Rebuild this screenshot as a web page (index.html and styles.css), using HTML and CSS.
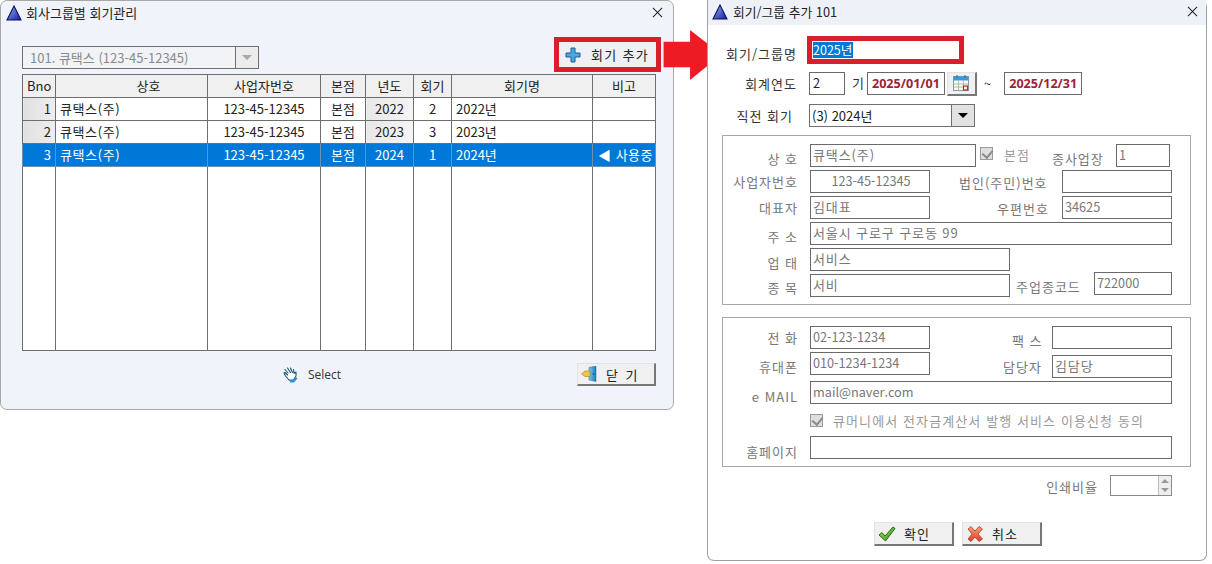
FILE: index.html
```html
<!DOCTYPE html>
<html lang="ko">
<head>
<meta charset="utf-8">
<title>회기관리</title>
<link rel="stylesheet" href="styles.css">
</head>
<body>
<section class="window win-left">
  <header class="titlebar">
    <svg class="app-icon" viewBox="0 0 16 16"><defs><linearGradient id="tri" x1="0" y1="0" x2="1" y2="1"><stop offset="0" stop-color="#9db4ff"/><stop offset="1" stop-color="#10189a"/></linearGradient><linearGradient id="chk" x1="0" y1="0" x2="1" y2="1"><stop offset="0" stop-color="#a6e05a"/><stop offset="1" stop-color="#2f8f1e"/></linearGradient><linearGradient id="xx" x1="0" y1="0" x2="0" y2="1"><stop offset="0" stop-color="#f7a080"/><stop offset="1" stop-color="#e23c22"/></linearGradient><linearGradient id="door" x1="0" y1="0" x2="1" y2="0"><stop offset="0" stop-color="#7cc8ef"/><stop offset="1" stop-color="#1878b8"/></linearGradient></defs><path d="M8 1 L15 15 H1 Z" fill="url(#tri)" stroke="#0a1060" stroke-width="1.1"/></svg>
    <span class="title">회사그룹별 회기관리</span>
    <svg class="close" viewBox="0 0 12 12"><path d="M1 1 L11 11 M11 1 L1 11" stroke="#222" stroke-width="1.1" fill="none"/></svg>
  </header>
  <div class="left-body">
    <div class="left-top">
      <div class="combo combo-company">
        <span class="combo-text">101. 큐택스 (123-45-12345)</span>
        <span class="combo-btn disabled"><i class="down"></i></span>
      </div>
      <div class="add-frame">
        <button class="btn add-btn">
          <svg class="ico16" viewBox="0 0 16 16"><path d="M6 1 H10 V6 H15 V10 H10 V15 H6 V10 H1 V6 H6 Z" fill="#4aa8e0" stroke="#1c5f96" stroke-width="1"/></svg>
          <span>회기 추가</span>
        </button>
      </div>
    </div>
    <table class="grid">
      <colgroup><col class="c1"><col class="c2"><col class="c3"><col class="c4"><col class="c5"><col class="c6"><col class="c7"><col class="c8"></colgroup>
      <thead><tr><th>Bno</th><th class="th-name">상호</th><th>사업자번호</th><th>본점</th><th>년도</th><th>회기</th><th>회기명</th><th>비고</th></tr></thead>
      <tbody>
        <tr><td class="num idx">1</td><td class="kr">큐택스(주)</td><td class="ctr">123-45-12345</td><td class="ctr">본점</td><td class="ctr yr">2022</td><td class="ctr">2</td><td>2022년</td><td></td></tr>
        <tr><td class="num idx">2</td><td class="kr">큐택스(주)</td><td class="ctr">123-45-12345</td><td class="ctr">본점</td><td class="ctr yr">2023</td><td class="ctr">3</td><td>2023년</td><td></td></tr>
        <tr class="sel"><td class="num">3</td><td class="kr">큐택스(주)</td><td class="ctr">123-45-12345</td><td class="ctr">본점</td><td class="ctr">2024</td><td class="ctr">1</td><td>2024년</td><td class="using">◀ 사용중</td></tr>
        <tr class="filler"><td></td><td></td><td></td><td></td><td></td><td></td><td></td><td></td></tr>
      </tbody>
    </table>
    <div class="left-bottom">
      <div class="select-link">
        <svg class="ico16" viewBox="0 0 16 16"><path d="M2 2.5 L5 6 M4.5 1 L7.5 5.5 M7.5 1 L9.5 5.5 M10.5 2.5 L11 6.5 L13 5 L13 9 L10.5 13 L6 13 L2.5 9 L1 6 L2 5.5 L4.5 8" fill="#fff" stroke="#17566f" stroke-width="1.1" stroke-linejoin="round" stroke-linecap="round"/><path d="M6 13 L10.5 13 L13 10 L14.5 11.5 L11 15.5 L7.5 15.5 Z" fill="#2f93d8"/></svg>
        <span>Select</span>
      </div>
      <button class="btn close-btn">
        <svg class="ico16" viewBox="0 0 16 16"><path d="M8 1.5 L15 0 V15.5 L8 14 Z" fill="url(#door)" stroke="#1a6aa0" stroke-width=".5"/><circle cx="12.5" cy="8" r=".7" fill="#0d3f66"/><path d="M0.5 8 L4 5 H9 V10.5 H4 Z" fill="#eec34e" stroke="#a0801f" stroke-width=".6"/></svg>
        <span>닫 기</span>
      </button>
    </div>
  </div>
</section>

<svg class="arrow" viewBox="0 0 60 52"><path d="M0 12 H27 V0 L59 25 L27 51 V38 H0 Z" fill="#ed1c24"/></svg>

<section class="window win-right">
  <header class="titlebar">
    <svg class="app-icon" viewBox="0 0 16 16"><path d="M8 1 L15 15 H1 Z" fill="url(#tri)" stroke="#0a1060" stroke-width="1.1"/></svg>
    <span class="title">회기/그룹 추가 101</span>
    <svg class="close" viewBox="0 0 12 12"><path d="M1 1 L11 11 M11 1 L1 11" stroke="#222" stroke-width="1.1" fill="none"/></svg>
  </header>
  <div class="form">
    <div class="row r-name">
      <label class="lab dark lab-name">회기/그룹명</label>
      <div class="name-box"><span class="selected">2025년</span></div>
    </div>
    <div class="row r-year">
      <label class="lab dark">회계연도</label>
      <div class="inp dark w36">2</div>
      <span class="gi">기</span>
      <div class="inp date w78">2025/01/01</div>
      <button class="btn cal-btn">
        <svg class="ico18" viewBox="0 0 18 18"><rect x="1.5" y="2.5" width="15" height="14" fill="#fbfbfb" stroke="#8a9aa8"/><rect x="1.5" y="2.5" width="15" height="4" fill="#3a9ad9"/><path d="M5 1 V4 M13 1 V4" stroke="#2a6a9a" stroke-width="1"/><path d="M2 10 H16 M2 13 H16 M6.5 7 V16 M11.5 7 V16" stroke="#9bb08a" stroke-width=".8"/><rect x="11.5" y="12" width="4" height="4" fill="#fff" stroke="#c22" stroke-width="1.2"/></svg>
      </button>
      <span class="tilde">~</span>
      <div class="inp date w78">2025/12/31</div>
    </div>
    <div class="row r-prev">
      <label class="lab dark lab-prev">직전 회기</label>
      <div class="combo combo-prev">
        <span class="combo-text dark">(3) 2024년</span>
        <span class="combo-btn"><i class="down black"></i></span>
      </div>
    </div>

    <div class="group g1">
      <div class="row"><label class="lab lab-d1">상 호</label><div class="inp kr w166">큐택스(주)</div><span class="chk chk1"></span><span class="txt bonjeom">본점</span><span class="txt worksite">종사업장</span><div class="inp w54">1</div></div>
      <div class="row"><label class="lab">사업자번호</label><div class="inp w120 ctr">123-45-12345</div><span class="txt corp">법인(주민)번호</span><div class="inp w110"></div></div>
      <div class="row"><label class="lab">대표자</label><div class="inp kr w120">김대표</div><span class="txt post">우편번호</span><div class="inp w110">34625</div></div>
      <div class="row"><label class="lab lab-d1">주 소</label><div class="inp kr w362">서울시 구로구 구로동 99</div></div>
      <div class="row"><label class="lab lab-d1">업 태</label><div class="inp kr w200">서비스</div></div>
      <div class="row"><label class="lab lab-d3">종 목</label><div class="inp kr w200">서비</div><span class="txt mainbiz">주업종코드</span><div class="inp w78 up2">722000</div></div>
    </div>

    <div class="group g2">
      <div class="row"><label class="lab">전 화</label><div class="inp w120">02-123-1234</div><span class="txt fax">팩 스</span><div class="inp w120 fax-inp"></div></div>
      <div class="row"><label class="lab lab-d1">휴대폰</label><div class="inp w120">010-1234-1234</div><span class="txt manager">담당자</span><div class="inp kr w120 fax-inp down3">김담당</div></div>
      <div class="row row-mail"><label class="lab lab-d2">e MAIL</label><div class="inp w362">mail@naver.com</div></div>
      <div class="row row-agree"><span class="chk chk2"></span><span class="txt agree">큐머니에서 전자금계산서 발행 서비스 이용신청 동의</span></div>
      <div class="row row-home"><label class="lab lab-d2">홈페이지</label><div class="inp w362"></div></div>
    </div>

    <div class="print-row">
      <span class="txt">인쇄비율</span>
      <div class="spin"><span class="spin-btns"><i class="up-tri"></i><i class="down-tri"></i></span></div>
    </div>

    <div class="actions">
      <button class="btn act-btn">
        <svg class="ico18" viewBox="0 0 18 18"><path d="M1 10 L4 7.5 L7 11 L15 2 L17 3.5 L7.5 16 Z" fill="url(#chk)" stroke="#2a6e12" stroke-width="1"/></svg>
        <span>확인</span>
      </button>
      <button class="btn act-btn">
        <svg class="ico18" viewBox="0 0 18 18"><path d="M2 4 L5 1.5 L9 6 L13 1.5 L16.5 4 L12 9 L16.5 14 L13 16.5 L9 12 L5 16.5 L2 14 L6 9 Z" fill="url(#xx)" stroke="#b03a20" stroke-width=".8"/></svg>
        <span>취소</span>
      </button>
    </div>
  </div>
</section>
</body>
</html>
```
FILE: styles.css
```css
* { box-sizing: border-box; }
html, body { margin: 0; padding: 0; }
body {
  position: relative;
  width: 1212px;
  height: 564px;
  overflow: hidden;
  background: #fff;
  font-family: "Noto Sans CJK KR", "Open Sans", sans-serif;
  font-size: 13px;
  color: #222;
}
.window { position: absolute; top: 0; display: flex; flex-direction: column; }
.win-left {
  left: 0; width: 674px; height: 410px;
  background: #f0f3f9;
  border: 1px solid #a8a8a8;
  border-radius: 7px;
}
.win-right {
  left: 707px; width: 500px; height: 561px;
  background: #fff;
  border: 1px solid #a0a0a0;
  border-top: 0;
  border-radius: 0 7px 7px 7px;
}
.titlebar {
  display: flex; align-items: center;
  height: 25px; flex: none;
  padding: 0 10px 2px 5px;
}
.win-right .titlebar { background: #eef2f8; padding: 0 8px 2px 4px; }
.app-icon { width: 16px; height: 16px; margin-right: 4px; }
.win-right .app-icon { margin-right: 5px; }
.title { flex: 1; font-size: 13px; line-height: 16px; color: #222; }
.win-right .title { font-size: 12.8px; }
.close { width: 11px; height: 11px; }

.left-body { padding: 11px 17px 0 21px; display: flex; flex-direction: column; flex: 1; }
.left-top { display: flex; justify-content: space-between; align-items: flex-start; height: 37px; }

.combo {
  display: flex; align-items: stretch;
  height: 23px;
  border: 1px solid #707070;
  background: #f1f3f7;
}
.combo-company { width: 237px; margin-top: 9px; }
.combo-text { flex: 1; padding-left: 7px; font-size: 13px; line-height: 21px; color: #8a8a8a; white-space: nowrap; }
.combo-text.dark { color: #222; padding-left: 2px; }
.combo-btn {
  width: 23px; background: #e2e2e2;
  border-left: 1px solid #707070;
  display: flex; align-items: center; justify-content: center;
}
.combo-btn.disabled { background: #ececec; }
.down { width: 0; height: 0; border-left: 5px solid transparent; border-right: 5px solid transparent; border-top: 5px solid #a8a8a8; }
.down.black { border-top-color: #000; }

.btn {
  display: flex; align-items: center;
  padding: 0; margin: 0;
  background: #f0f0f0;
  border: 1px solid #e2e2e2;
  border-right: 2px solid #777;
  border-bottom: 2px solid #777;
  font-family: inherit; font-size: 13px; color: #222;
}
.ico16 { width: 16px; height: 16px; flex: none; }
.ico18 { width: 18px; height: 18px; flex: none; }

.add-frame {
  width: 107px; height: 35px;
  margin: 0 -5px 0 0;
  border: 5px solid #d9202a;
  background: #fff;
}
.add-btn {
  width: 97px; height: 25px;
  border: 0; background: #eef0f3;
  padding-left: 6px; gap: 10px;
  letter-spacing: 1.3px;
}

.grid {
  width: 633px; height: 277px;
  border-collapse: collapse; table-layout: fixed;
  background: #fff; font-size: 13px;
}
.grid th, .grid td { border: 1px solid #6e6e6e; padding: 0 4px; white-space: nowrap; overflow: hidden; }
.grid th { background: #f0f0f0; font-weight: 400; height: 23px; line-height: 20px; }
.grid th.th-name { padding-left: 38px; }
.grid td { height: 23px; line-height: 20px; }
.c1 { width: 33px; } .c2 { width: 152px; } .c3 { width: 113px; } .c4 { width: 45px; }
.c5 { width: 48px; } .c6 { width: 38px; } .c7 { width: 141px; } .c8 { width: 63px; }
.ctr { text-align: center; }
.num { text-align: right; }
.kr { letter-spacing: .6px; }
.grid td.idx { background: linear-gradient(90deg, #e0e0e0, #eeeeee); }
.grid td.yr { background: linear-gradient(90deg, #e8e8e8, #f4f4f4); }
.grid .sel td { background: #0078d7; color: #fff; border-color: #6e8fae; border-top: 1px dotted #9db5cc; }
.grid .sel td.using { padding: 0 0 0 5px; letter-spacing: .5px; }
.grid .filler td { height: auto; }

.left-bottom { display: flex; align-items: center; justify-content: space-between; padding: 12px 0 0 261px; }
.select-link { display: flex; align-items: center; gap: 9px; color: #333; font-family: "Open Sans", sans-serif; font-size: 12px; }
.close-btn { width: 79px; height: 23px; padding-left: 3px; gap: 9px; letter-spacing: 2px; }

.arrow { position: absolute; left: 663px; top: 30px; width: 60px; height: 51px; }

.form { padding: 11px 0 0 14px; flex: 1; }
.row { display: flex; align-items: center; height: 23px; margin-bottom: 3px; }
.lab {
  width: 75px; margin-right: 12px; flex: none;
  text-align: right; font-size: 13px; color: #777; letter-spacing: 1px; white-space: nowrap;
}
.lab.dark { color: #333; }
.lab-d1 { margin-top: 5px; }
.lab-d2 { margin-top: 7px; }
.lab-d3 { margin-top: 3px; }
.inp {
  height: 23px; flex: none;
  border: 1px solid #6a6a6a;
  background: #fff;
  padding-left: 2px;
  font-size: 12.7px; line-height: 20px; color: #777;
  white-space: nowrap;
}
.inp.kr { font-size: 13px; letter-spacing: .9px; }
.inp.dark { color: #222; padding-left: 3px; }
.inp.ctr { text-align: center; }
.w36 { width: 36px; } .w54 { width: 54px; } .w78 { width: 78px; } .w110 { width: 110px; }
.w120 { width: 120px; } .w166 { width: 166px; } .w200 { width: 200px; } .w362 { width: 362px; }
.txt { font-size: 13px; color: #777; letter-spacing: 1px; white-space: nowrap; }

.r-name { height: 28px; margin: 0 0 8px; }
.lab-name { margin-right: 10px; margin-top: 6px; }
.name-box { width: 157px; height: 28px; border: 5px solid #d9202a; padding: 1px 0 0 1px; background: #fff; line-height: 16px; }
.selected { display: inline-block; background: #0078d7; color: #fff; font-size: 12.5px; line-height: 16px; padding-right: 1px; }
.r-year { margin-bottom: 9px; }
.gi { margin: 0 3px 3px 7px; color: #333; font-size: 13px; }
.date { color: #9b2335; font-weight: 700; font-family: "Open Sans", sans-serif; font-size: 12.6px; padding: 1px 0 0; text-align: center; }
.cal-btn { width: 30px; height: 24px; margin-left: 2px; justify-content: center; }
.tilde { margin: 0 13px 0 7px; color: #333; }
.r-prev { margin-bottom: 8px; }
.lab-prev { padding-right: 4px; }
.combo-prev { width: 166px; background: #fff; }

.group { width: 469px; border: 1px solid #a6a6a6; padding: 8px 0 0; }
.group .lab { width: 75px; }
.g1 { height: 170px; margin-bottom: 12px; }
.g2 { height: 150px; margin-bottom: 7px; }

.chk { position: relative; flex: none; width: 13px; height: 13px; border: 1px solid #9a9a9a; background: #dedede; }
.chk::after {
  content: ""; position: absolute; left: 3px; top: 0;
  width: 5px; height: 8px;
  border: solid #8a8a8a; border-width: 0 2px 2px 0;
  transform: rotate(40deg);
}
.chk1 { margin: -4px 0 0 4px; }
.bonjeom { margin: -3px 0 0 11px; color: #999; }
.worksite { margin: 5px 0 0 22px; width: 64px; }
.corp { margin: 2px 0 0 29px; width: 103px; }
.post { margin: 2px 0 0 67px; width: 65px; }
.mainbiz { margin: 2px 0 0 6px; width: 78px; }
.up2 { margin-top: -4px; }
.fax { margin: 5px 0 0 82px; width: 40px; }
.manager { margin: 6px 0 0 73px; width: 49px; }
.down3 { margin-top: 6px; }
.row-mail { margin: 6px 0 0; }
.row-agree { height: 13px; margin: 10px 0 0 87px; }
.chk2 { margin-right: 10px; }
.agree { color: #999; letter-spacing: 1.1px; }
.row-home { margin: 9px 0 0; }

.print-row { display: flex; align-items: center; width: 450px; justify-content: flex-end; }
.print-row .txt { margin: 3px 12px 0 0; }
.spin { width: 62px; height: 21px; margin-top: 1px; border: 1px solid #8a8a8a; display: flex; justify-content: flex-end; }
.spin-btns { width: 13px; display: flex; flex-direction: column; border-left: 1px solid #bbb; background: #eee; align-items: center; justify-content: space-around; }
.up-tri, .down-tri { width: 0; height: 0; border-left: 4px solid transparent; border-right: 4px solid transparent; }
.up-tri { border-bottom: 4px solid #999; }
.down-tri { border-top: 4px solid #999; }

.actions { display: flex; gap: 8px; margin: 26px 0 0 152px; }
.act-btn { width: 80px; height: 24px; padding-left: 3px; gap: 8px; letter-spacing: 1px; }
```
